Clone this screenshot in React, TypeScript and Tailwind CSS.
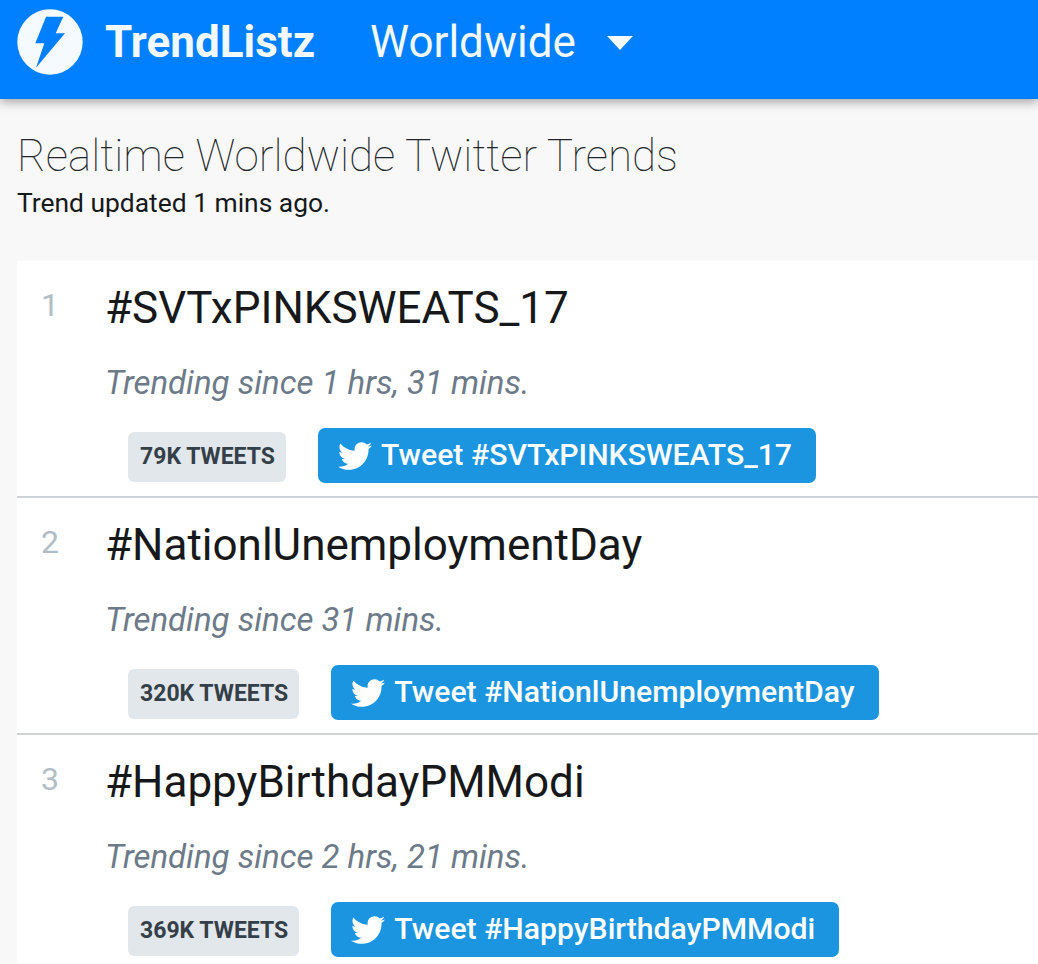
import { FaTwitter } from "react-icons/fa";

const trends = [
  { rank: 1, tag: "#SVTxPINKSWEATS_17", since: "1 hrs, 31 mins.", count: "79K" },
  { rank: 2, tag: "#NationlUnemploymentDay", since: "31 mins.", count: "320K" },
  { rank: 3, tag: "#HappyBirthdayPMModi", since: "2 hrs, 21 mins.", count: "369K" },
];

function Logo() {
  return (
    <svg viewBox="0 0 66 66" className="w-[66px] h-[66px] shrink-0">
      <circle cx="33" cy="33" r="32.7" fill="#f5faff" />
      <path d="M29 7.7 L46.3 7.7 L38.7 24.3 L48 24.3 L19 58.7 L27.3 34.3 L18.3 34.3 Z" fill="#0080ff" />
    </svg>
  );
}

export default function App() {
  return (
    <div className="h-[964px] overflow-hidden bg-[#f8f8f8] font-['Roboto',sans-serif]">
      <header className="h-[99px] bg-[#0080ff] flex items-start pl-[17px] pt-[9px] shadow-[0_3px_10px_rgba(0,0,0,0.35)] relative">
        <Logo />
        <span className="ml-[22px] mt-[5px] text-[44px] leading-[56px] font-bold text-[#f2f9ff]">TrendListz</span>
        <span className="ml-[55px] mt-[5px] text-[44px] leading-[56px] text-[#f2f9ff]">Worldwide</span>
        <span className="ml-[31px] mt-[27px] w-0 h-0 border-x-[13px] border-x-transparent border-t-[14px] border-t-[#f2f9ff]" />
      </header>
      <div className="pl-[18px] pt-[29px]">
        <h1 className="-ml-px text-[44px] leading-[56px] font-thin text-[#212529]">Realtime Worldwide Twitter Trends</h1>
        <p className="-ml-px text-[26.4px] leading-[32px] text-[#16181a] mt-[3px]">Trend updated 1 mins ago.</p>
      </div>
      <div className="ml-[17px] mt-[42px] bg-white">
        {trends.map((t) => (
          <div key={t.rank} className="h-[237px] border-b-2 border-[#cfd3d6] flex">
            <div className="w-[88px] pl-[24px] pt-[25px] text-[32px] leading-[38px] text-[#b2bdc5]">{t.rank}</div>
            <div className="pt-[19px]">
              <div className="text-[44px] leading-[56px] text-[#16181a]">{t.tag}</div>
              <div className="mt-[28px] text-[33px] leading-[38px] italic text-[#6c7a89]">Trending since {t.since}</div>
              <div className="mt-[26px] ml-[23px] flex items-center gap-[32px]">
                <span className="h-[50px] mt-[3px] pl-[12px] pr-[11px] flex items-center rounded-[6px] bg-[#e2e7ec] text-[23px] font-bold text-[#343f48]">{t.count} TWEETS</span>
                <button className="h-[55px] pl-[20px] pr-[24px] pb-[2px] flex items-center gap-[9px] rounded-[7px] bg-[#1b95e0] text-white text-[30.2px] font-medium">
                  <FaTwitter className="w-[34px] h-[34px] mt-[2px]" />
                  Tweet {t.tag}
                </button>
              </div>
            </div>
          </div>
        ))}
      </div>
    </div>
  );
}
